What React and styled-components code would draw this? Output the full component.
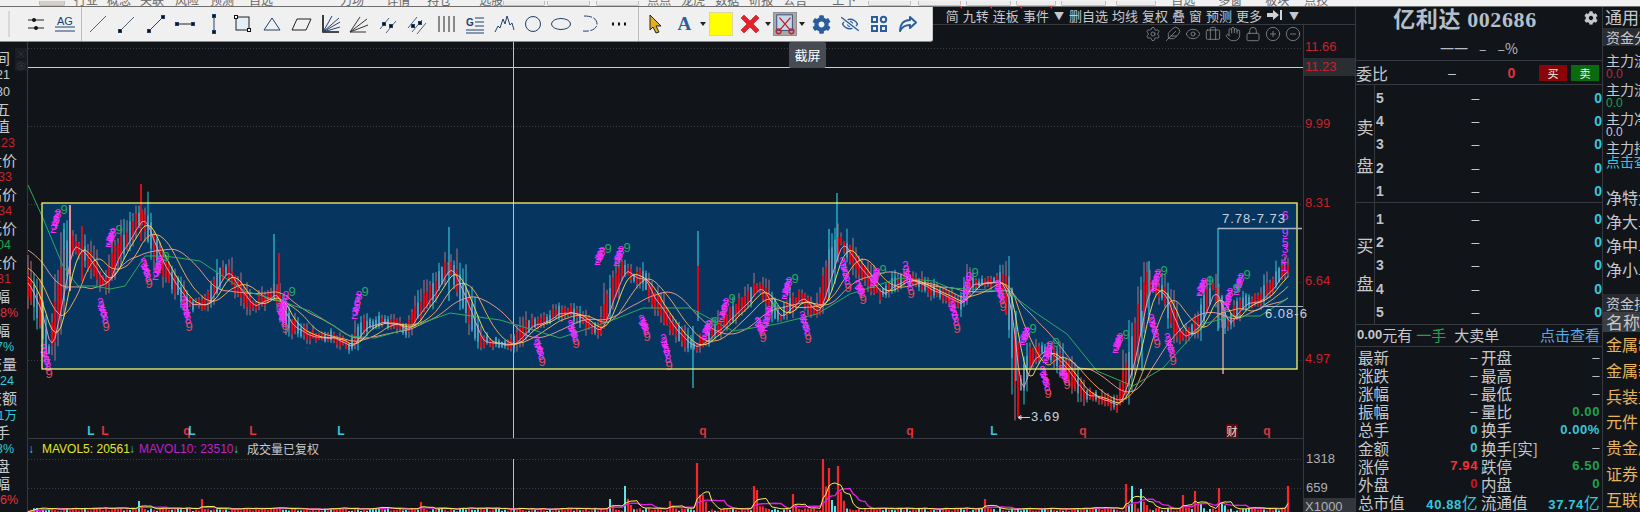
import React from "react";
import styled, { createGlobalStyle } from "styled-components";
import { Settings, Feather, Eye, Briefcase, Hand, Lock, CirclePlus, CircleMinus, X } from "lucide-react";
import { FaCog, FaRegEyeSlash } from "react-icons/fa";

const CJK = `"Noto Sans CJK SC", "Liberation Sans", sans-serif`;
const NUM = `"Liberation Sans", "Noto Sans CJK SC", sans-serif`;
const LINE = "#363a40";
const RED = "#e0323c";
const CYAN = "#33c8dc";
const GREEN = "#1fa34a";

const GlobalStyle = createGlobalStyle`
  html, body { margin: 0; padding: 0; background: #11151a; }
  #root { width: 1640px; height: 512px; overflow: hidden; }
`;

// chart data, coordinates are page pixels
const PATH = [
  [28, 285], [40, 312], [49, 352], [62, 290], [70, 245], [80, 250], [90, 262], [105, 285], [115, 260], [130, 235],
  [142, 215], [155, 250], [165, 270], [187, 303], [205, 305], [225, 270], [240, 290], [253, 306], [275, 293], [290, 325],
  [310, 335], [330, 337], [350, 345], [365, 325], [385, 320], [405, 330], [430, 297], [450, 265], [465, 300], [480, 340],
  [510, 345], [533, 323], [570, 310], [600, 332], [610, 300], [623, 270], [643, 280], [667, 320], [693, 348], [713, 333],
  [760, 287], [780, 317], [800, 297], [817, 313], [840, 240], [867, 277], [880, 293], [907, 277], [947, 297], [960, 303],
  [970, 283], [1000, 280], [1010, 310], [1018, 395], [1030, 360], [1043, 347], [1060, 360], [1083, 393], [1117, 405],
  [1130, 370], [1147, 287], [1163, 293], [1180, 337], [1197, 327], [1213, 287], [1227, 327], [1243, 303], [1260, 300], [1287, 268],
];
const LONG_MA = [
  [28, 184], [42, 215], [63, 265], [78, 285], [95, 285], [110, 288], [125, 285], [145, 255], [165, 255], [200, 260], [245, 290],
  [280, 300], [310, 310], [350, 335], [375, 337], [400, 330], [450, 312], [500, 319], [560, 337], [610, 320], [643, 307], [690, 307],
  [733, 330], [777, 323], [817, 313], [850, 293], [900, 277], [933, 280], [950, 287], [1007, 290], [1033, 310], [1067, 333],
  [1097, 370], [1133, 385], [1163, 367], [1203, 323], [1233, 315], [1260, 315], [1287, 298],
];
const SPIKES = [
  [64, 222, 300, CYAN], [70, 204, 290, "#e8909a"], [82, 225, 280, "#d01018"], [141, 183, 240, "#d01018"], [274, 233, 300, CYAN],
  [279, 252, 300, "#d01018"], [449, 226, 300, CYAN], [698, 230, 320, CYAN], [698, 265, 310, "#e00010"], [693, 325, 387, CYAN],
  [837, 192, 260, CYAN], [829, 228, 300, CYAN], [1018, 340, 416, "#e00010"], [1016, 310, 380, CYAN], [1149, 260, 320, CYAN],
  [1218, 227, 330, CYAN], [1223, 300, 373, "#a08088"], [1142, 310, 370, CYAN],
];
const RED_NINES = [
  [106, 325], [189, 325], [149, 282], [49, 372], [285, 327], [542, 360], [576, 342], [647, 335], [669, 364], [763, 336], [808, 337],
  [848, 286], [863, 298], [911, 292], [957, 327], [1003, 305], [1048, 392], [1067, 383], [1157, 342], [1173, 359],
];
const GREEN_NINES = [
  [64, 208], [119, 228], [166, 255], [292, 290], [365, 290], [608, 247], [627, 246], [715, 320], [732, 297], [775, 305], [795, 277],
  [883, 268], [975, 271], [1033, 327], [1056, 341], [1126, 333], [1164, 269], [1210, 279], [1236, 287], [1247, 273],
];
const VOL_SPIKES = [
  [625, 485], [610, 498], [671, 500], [698, 462], [753, 485], [756, 489], [792, 493], [824, 458], [828, 467], [837, 465], [984, 498],
  [1127, 483], [1131, 485], [1141, 488], [1183, 494], [1196, 490], [1218, 487], [1287, 485], [201, 498], [140, 500], [420, 501],
];
const MARKS = [
  ["L", 91, CYAN], ["L", 105, RED], ["q", 187, RED], ["L", 192, CYAN], ["L", 253, RED], ["L", 341, CYAN],
  ["q", 703, RED], ["q", 910, RED], ["L", 994, CYAN], ["q", 1083, RED], ["q", 1267, RED],
];
const TAIL_DIGITS = [["6", 1285, 215], ["9", 1285, 232], ["5", 1285, 242], ["3", 1285, 248], ["2", 1284, 258], ["1", 1284, 266]];

function interp(points, x) {
  for (let i = 1; i < points.length; i++) {
    if (x <= points[i][0]) {
      const [x0, y0] = points[i - 1];
      const [x1, y1] = points[i];
      return y0 + ((y1 - y0) * (x - x0)) / (x1 - x0);
    }
  }
  return points[points.length - 1][1];
}

function makeRandom(seed) {
  let a = seed;
  return () => {
    a = (a + 0x6d2b79f5) | 0;
    let t = Math.imul(a ^ (a >>> 15), 1 | a);
    t = (t + Math.imul(t ^ (t >>> 7), 61 | t)) ^ t;
    return ((t ^ (t >>> 14)) >>> 0) / 4294967296;
  };
}

function buildChart() {
  const rnd = makeRandom(686);
  const bars = [];
  for (let x = 28; x <= 1288; x += 3) {
    const mid = interp(PATH, x) + (rnd() - 0.5) * 5;
    const slope = Math.abs(interp(PATH, x + 6) - interp(PATH, x - 6));
    const size = 2 + slope * 0.4 + rnd() * 3;
    const up = rnd() > 0.35;
    bars.push({
      x, mid, up,
      top: mid - size,
      bottom: mid + size * 0.6,
      high: mid - size - rnd() * (3 + slope * 0.7),
      low: mid + size * 0.6 + rnd() * (3 + slope * 0.4),
    });
  }
  const average = (w, lift) =>
    bars.map((b, i) => {
      let sum = 0;
      for (let k = i - w + 1; k <= i; k++) sum += k < 0 ? bars[0].mid - lift : bars[k].mid;
      return `${b.x},${(sum / w).toFixed(1)}`;
    }).join(" ");
  const volumes = bars.map((b) => {
    let h = 2 + rnd() * 3;
    VOL_SPIKES.forEach(([sx, sy]) => {
      const d = b.x - sx;
      if (d >= 0 && d < 12) h = Math.max(h, (512 - sy) * (1 - d / 12) * (0.35 + rnd() * 0.4));
      if (Math.abs(d) < 2) h = 512 - sy;
    });
    return { x: b.x, h, up: b.up };
  });
  const volAverage = (w) =>
    volumes.map((v, i) => {
      let sum = 0;
      for (let k = Math.max(0, i - w + 1); k <= i; k++) sum += volumes[k].h;
      return `${v.x},${(512 - sum / w - 1).toFixed(1)}`;
    }).join(" ");
  const seq = [];
  RED_NINES.forEach(([x, y]) => {
    const sy = 1.4 + rnd() * 2;
    for (let n = 8; n >= 2; n--) seq.push([n, x - (9 - n) * 0.8, y - (9 - n) * sy - 3]);
  });
  GREEN_NINES.forEach(([x, y]) => {
    const sy = 1.4 + rnd() * 2;
    for (let n = 8; n >= 2; n--) seq.push([n, x - 5 - (9 - n) * 0.8, y + (9 - n) * sy + 2]);
  });
  return {
    bars, volumes, seq,
    ma5: average(3, 8), ma10: average(6, 14), ma20: average(12, 22), ma30: average(22, 40),
    maLong: LONG_MA.map((p) => p.join(",")).join(" "),
    vol5: volAverage(5), vol10: volAverage(10),
  };
}
const chart = buildChart();

const segs = (list) => list.map((s) => `M${s[0]} ${s[1]}V${s[2]}`).join("");

const Page = styled.div`
  width: 1640px;
  height: 512px;
  position: relative;
  overflow: hidden;
  background: #11151a;
  color: #c6c8cc;
  font-family: ${CJK};
  display: flex;
  flex-direction: column;
`;

const TopStrip = styled.div`
  height: 6px;
  flex: none;
  display: flex;
  align-items: flex-end;
  overflow: hidden;
  background: #f1f1f1;
  border-bottom: 1px solid #6e6e6e;
`;
const StripText = styled.span`
  flex: none;
  margin-left: ${(p) => p.$gap}px;
  font-size: 12px;
  line-height: 12px;
  color: #666;
`;
const StripBox = styled.span`
  flex: none;
  width: ${(p) => p.$w}px;
  height: 5px;
  margin-left: ${(p) => p.$gap}px;
  box-sizing: border-box;
  border: 1px solid #bdbdbd;
  border-top: 0;
  border-radius: 0 0 2px 2px;
  background: ${(p) => (p.$dark ? "#d6cfc8" : "#ececec")};
`;

const Main = styled.div`
  flex: 1;
  display: flex;
  min-height: 0;
`;

const InfoColumn = styled.div`
  flex: none;
  width: 27px;
  padding-top: 42px;
  box-sizing: border-box;
  overflow: hidden;
  position: relative;
`;
const InfoRow = styled.div`
  height: 17px;
  display: flex;
  justify-content: flex-end;
  align-items: center;
  padding-right: ${(p) => 27 - p.$end}px;
  white-space: nowrap;
  font-size: ${(p) => (p.$num ? 12.5 : 15)}px;
  font-family: ${(p) => (p.$num ? NUM : CJK)};
  color: ${(p) => p.$color || "#c6c8cc"};
`;
const PlotTools = styled.div`
  position: absolute;
  left: 15px;
  top: 41px;
  width: 12px;
  display: flex;
  flex-direction: column;
  gap: 1px;
  color: #4c5157;
`;
const PlotTool = styled.span`
  height: 11px;
  display: flex;
  align-items: center;
  justify-content: center;
  background: #1b1f24;
`;

const ChartArea = styled.div`
  flex: none;
  width: 1328px;
  position: relative;
  display: flex;
  flex-direction: column;
`;
const NavBar = styled.div`
  flex: none;
  height: 18px;
  box-sizing: border-box;
  display: flex;
  justify-content: flex-end;
  align-items: center;
  gap: 4px;
  padding-right: 55px;
  border-bottom: 1px solid ${LINE};
  font-size: 13px;
`;
const NavItem = styled.span`
  position: relative;
  white-space: nowrap;
  ${(p) => p.$flag && `
    &::after {
      content: "";
      position: absolute;
      top: 0;
      right: -3px;
      border-top: 3px solid ${RED};
      border-left: 3px solid transparent;
    }
  `}
`;
const NavArrow = styled.span`
  font-size: 10px;
  color: #c6c8cc;
  margin: 0 1px;
`;
const ViewIcons = styled.div`
  position: absolute;
  top: 19px;
  right: 54px;
  display: flex;
  gap: 4px;
  color: #8d9196;
`;
const ChartSvg = styled.svg`
  display: block;
  flex: none;
`;
const AxisText = styled.text`
  font-family: ${NUM};
  font-size: 13px;
  fill: ${(p) => p.$color || "#c8212d"};
`;
const NoteText = styled.text`
  font-family: ${NUM};
  font-size: 13px;
  letter-spacing: 1px;
  fill: #c8d2dc;
`;
const LegendText = styled.text`
  font-family: ${(p) => (p.$cjk ? CJK : NUM)};
  font-size: 12px;
  fill: ${(p) => p.$color};
`;
const Digit = styled.text`
  font-family: ${NUM};
  font-size: ${(p) => p.$size}px;
  fill: ${(p) => p.$color};
  text-anchor: middle;
  dominant-baseline: central;
`;
const Mark = styled.text`
  font-family: ${NUM};
  font-size: 12px;
  font-weight: 700;
  text-anchor: middle;
  dominant-baseline: central;
  fill: ${(p) => p.$color};
`;
const MarkCjk = styled.text`
  font-family: ${CJK};
  font-size: 11px;
  text-anchor: middle;
  dominant-baseline: central;
  fill: #e8e0d8;
`;

const QuotePanel = styled.div`
  flex: none;
  width: 248px;
  box-sizing: border-box;
  border-left: 1px solid ${LINE};
  border-right: 1px solid ${LINE};
`;
const TitleBlock = styled.div`
  height: 54px;
  box-sizing: border-box;
  border-bottom: 1px solid ${LINE};
  text-align: center;
  position: relative;
`;
const Title = styled.div`
  font-family: "Liberation Serif", "Noto Sans CJK SC", serif;
  font-weight: 700;
  font-size: 22px;
  line-height: 26px;
  padding-right: 28px;
  color: #b3bfca;
  letter-spacing: 0.6px;
`;
const SubQuote = styled.div`
  display: flex;
  justify-content: center;
  gap: 11px;
  font-size: 14px;
  line-height: 20px;
  margin-top: 5px;
  color: #b8bbc0;
`;
const TitleGear = styled.span`
  position: absolute;
  top: 4px;
  right: 4px;
  color: #c4c8cc;
  font-size: 0;
`;
const RatioRow = styled.div`
  height: 24px;
  box-sizing: border-box;
  display: grid;
  grid-template-columns: 64px 64px 55px 28px 4px 28px;
  align-items: center;
  border-bottom: 1px solid ${LINE};
  font-size: 16px;
`;
const RatioValue = styled.span`
  text-align: ${(p) => p.$align || "center"};
  font-family: ${NUM};
  font-size: 14px;
  font-weight: ${(p) => (p.$color ? 700 : 400)};
  color: ${(p) => p.$color || "#c6c8cc"};
`;
const TradeTag = styled.span`
  height: 16px;
  line-height: 16px;
  text-align: center;
  font-size: 11px;
  color: #f2f2f2;
  background: ${(p) => p.$bg};
`;
const Book = styled.div`
  display: flex;
  height: ${(p) => p.$h}px;
  box-sizing: border-box;
  border-bottom: 1px solid ${LINE};
`;
const BookLabel = styled.div`
  flex: none;
  width: 19px;
  box-sizing: border-box;
  padding-top: ${(p) => p.$top || 0}px;
  border-right: 1px solid ${LINE};
  display: flex;
  flex-direction: column;
  justify-content: center;
  align-items: center;
  gap: 18px;
  font-size: 17px;
  line-height: 20px;
`;
const BookRows = styled.div`
  flex: 1;
  padding-top: ${(p) => p.$top}px;
`;
const BookRow = styled.div`
  height: 23.3px;
  display: grid;
  grid-template-columns: 24px 1fr 24px;
  align-items: center;
  font-family: ${NUM};
  font-size: 14px;
`;
const BookNum = styled.span`
  padding-left: 1px;
  font-weight: 700;
  color: #bfc2c6;
`;
const BookDash = styled.span`
  text-align: center;
  padding-right: 26px;
  color: #c6c8cc;
`;
const BookZero = styled.span`
  text-align: right;
  font-weight: 700;
  color: ${CYAN};
`;
const SummaryRow = styled.div`
  height: 22px;
  box-sizing: border-box;
  display: flex;
  align-items: center;
  padding: 0 2px 2px 1px;
  border-bottom: 1px solid ${LINE};
  font-size: 15px;
  white-space: nowrap;
`;
const SummaryNum = styled.span`
  font-family: ${NUM};
  font-weight: 700;
  font-size: 13px;
`;
const SummaryHand = styled.span`
  color: ${GREEN};
  margin: 0 8px 0 4px;
`;
const SummaryLink = styled.span`
  margin-left: auto;
  color: #5aa8e0;
`;
const StatsGrid = styled.div`
  display: grid;
  grid-template-columns: 120px 119px;
  column-gap: 3px;
  padding: 1px 0 0 2px;
`;
const StatCell = styled.div`
  height: 18.1px;
  display: flex;
  justify-content: space-between;
  align-items: center;
  font-size: 15.5px;
  white-space: nowrap;
`;
const StatValue = styled.span`
  font-family: ${NUM};
  font-size: 13px;
  font-weight: ${(p) => (p.$color ? 700 : 400)};
  letter-spacing: 0.6px;
  color: ${(p) => p.$color || "#c6c8cc"};
`;
const StatUnit = styled.span`
  font-family: ${CJK};
  font-weight: 400;
  font-size: 15.5px;
`;

const SidePanel = styled.div`
  flex: 1;
  min-width: 0;
  overflow: hidden;
  white-space: nowrap;
  display: flex;
  flex-direction: column;
`;
const SideHead = styled.div`
  height: 19px;
  padding-left: 2px;
  font-size: 17px;
  line-height: 19px;
  flex: none;
`;
const SideBand = styled.div`
  flex: none;
  height: ${(p) => p.$h}px;
  line-height: ${(p) => p.$h}px;
  margin-top: ${(p) => p.$top || 0}px;
  padding-left: 3px;
  font-size: ${(p) => p.$size}px;
  background: ${(p) => p.$bg};
  color: ${(p) => p.$color || "#c6c8cc"};
`;
const SideLine = styled.div`
  flex: none;
  height: ${(p) => p.$h}px;
  line-height: ${(p) => p.$h}px;
  margin-top: ${(p) => p.$top || 0}px;
  padding-left: 3px;
  font-size: ${(p) => p.$size}px;
  font-family: ${(p) => (p.$num ? NUM : CJK)};
  color: ${(p) => p.$color || "#c6c8cc"};
`;

const Toolbar = styled.div`
  position: absolute;
  left: 0;
  top: 7px;
  width: 933px;
  height: 35px;
  box-sizing: border-box;
  display: flex;
  align-items: center;
  background: #f0f0f0;
  border-bottom: 1px solid #8c8c8c;
  border-right: 1px solid #c8c8c8;
  border-bottom-right-radius: 3px;
`;
const Grip = styled.span`
  flex: none;
  width: 2px;
  height: 26px;
  margin: 0 12px 0 8px;
  background: #d8d8d8;
`;
const ToolDivider = styled.span`
  flex: none;
  width: 1px;
  height: 100%;
  margin: 0 ${(p) => p.$after}px 0 ${(p) => p.$before}px;
  background: #bcbcbc;
`;
const Tool = styled.span`
  flex: none;
  width: ${(p) => p.$w}px;
  height: 24px;
  display: flex;
  align-items: center;
  justify-content: center;
`;
const ColorSwatch = styled.span`
  flex: none;
  width: 24px;
  height: 24px;
  margin: 0 3px 0 2px;
  box-sizing: border-box;
  background: #ffff00;
  border: 1px solid #d8d8a0;
`;
const ShotButton = styled.span`
  flex: none;
  width: 24px;
  height: 24px;
  display: flex;
  align-items: center;
  justify-content: center;
  background: #a8a8a8;
  border: 1px solid #909090;
  box-sizing: border-box;
`;
const Caret = styled.span`
  flex: none;
  width: ${(p) => p.$w || 12}px;
  display: flex;
  justify-content: center;
  &::before {
    content: "";
    border-top: 4px solid #222;
    border-left: 3.5px solid transparent;
    border-right: 3.5px solid transparent;
  }
`;
const LetterA = styled.span`
  font-family: "Liberation Serif", serif;
  font-weight: 700;
  font-size: 19px;
  color: #2d5f9e;
`;
const Tooltip = styled.div`
  position: absolute;
  left: 789px;
  top: 42px;
  width: 37px;
  height: 26px;
  line-height: 26px;
  text-align: center;
  border-radius: 2px;
  font-size: 13px;
  color: #fff;
  background: #474c54;
`;

const INK = "#21406e";
const Dot = ({ x, y }) => <rect x={x - 1.5} y={y - 1.5} width="3" height="3" fill="#111" />;
const Ico = ({ children, size = 24 }) => (
  <svg width={size} height={size} viewBox="0 0 24 24" fill="none" stroke={INK} strokeWidth="1">
    {children}
  </svg>
);

const DRAW_TOOLS = [
  <><path d="M4 20 20 4" stroke="#54647c" /></>,
  <><path d="M5 19 19 5" stroke="#54647c" /><Dot x={5} y={19} /></>,
  <><path d="M5 19 19 5" /><Dot x={5} y={19} /><Dot x={19} y={5} /></>,
  <><path d="M4 12h16" stroke="#222" /><Dot x={4} y={12} /><Dot x={20} y={12} /></>,
  <><path d="M12 4v16" /><Dot x={12} y={4} /><Dot x={12} y={20} /></>,
  <><rect x="5" y="5" width="13" height="13" fill="#e4eef8" stroke="#222" /><rect x="3.5" y="3.5" width="3" height="3" fill="#fff" stroke="#111" /><rect x="16.5" y="16.5" width="3" height="3" fill="#fff" stroke="#111" /></>,
  <><path d="M12 6 20 18H4Z" /></>,
  <><path d="M8 7H22L17 18H3Z" stroke="#222" /></>,
  <><path d="M5 3V20H21" stroke="#111" strokeWidth="1.6" /><path d="M5 20 21 6M5 20 22 10M5 20 22 15M5 20 14 4" /></>,
  <><path d="M3 20 20 7M3 20 21 13M3 20 13 5M3 20H19" stroke="#333" /></>,
  <><path d="M4 17 13 6M10 21 20 9" stroke="#54647c" /><Dot x={8} y={12} /><Dot x={15} y={14} /></>,
  <><path d="M3 16 12 5M7 20 17 8M12 22 21 11" stroke="#54647c" /><Dot x={8} y={14} /><Dot x={15} y={11} /></>,
  <><path d="M5 4v16M10 4v16M15 4v16M20 4v16" stroke="#222" /></>,
  <><text x="3" y="14" fontFamily="Liberation Sans" fontSize="10" fontWeight="700" fill={INK} stroke="none">G</text><path d="M12 6h9M12 10h9M12 14h9M3 18h18M3 21h18" /></>,
  <><path d="M3 20 6 14 8 16 11 7 13 12 15 4 18 13 20 11 22 18" stroke={INK} /></>,
  <><circle cx="12" cy="12" r="7.5" /></>,
  <><ellipse cx="12" cy="12" rx="9.5" ry="5.5" /></>,
  <><path d="M6 4C16 4 19 8 19 12S14 20 5 19" strokeDasharray="8 1.5" /></>,
  <><path d="M5 12h2M11 12h2M17 12h2" stroke="#111" strokeWidth="3" /></>,
];

const STRIP = [
  ["box", 26, 39, true], ["t", "行业", 9], ["t", "概念", 9], ["t", "关联", 9], ["t", "风险", 11], ["t", "预测", 11], ["t", "自选", 15],
  ["t", "一", 30], ["t", "力场", 25], ["t", "详情", 22], ["t", "持仓", 17], ["t", "选股", 28], ["box", 42, 0], ["box", 43, 2], ["box", 43, 6],
  ["t", "点点", 8], ["t", "龙虎", 10], ["t", "数据", 10], ["t", "研报", 10], ["t", "公告", 10], ["t", "上下", 25], ["box", 43, 12], ["box", 43, 7], ["box", 45, 5],
  ["box", 40, 5], ["box", 45, 5], ["box", 40, 10], ["t", "自选", 15], ["t", "多窗", 23], ["t", "板块", 23], ["t", "点技", 15],
];

const INFO = [
  ["时间", 10], ["12-21", 10, "", 1], ["09:30", 10, "", 1], ["周五", 10], ["数值", 10], ["7.23", 15, "#c8212d", 1], ["开盘价", 17],
  ["7.33", 12, "#c8212d", 1], ["最高价", 17], ["7.34", 12, "#c8212d", 1], ["最低价", 17], ["7.04", 11, GREEN, 1], ["收盘价", 17], ["7.31", 11, "#c8212d", 1],
  ["涨幅", 10], ["1.38%", 18, "#e0323c", 1], ["振幅", 10], ["4.17%", 14, CYAN, 1], ["成交量", 17], ["5624", 14, CYAN, 1], ["成交额", 17], ["4.1万", 17, CYAN, 1],
  ["换手", 10], ["1.3%", 14, CYAN, 1], ["开盘", 10], ["涨幅", 10], ["0.76%", 18, "#e0323c", 1],
];

const NAV = ["简", "九转", "连板", "事件"];
const NAV_RIGHT = ["删自选", "均线", "复权", "叠", "窗", "预测", "更多"];

const STATS = [
  ["最新", "–", "开盘", "–"],
  ["涨跌", "–", "最高", "–"],
  ["涨幅", "–", "最低", "–"],
  ["振幅", "–", "量比", "0.00", "#1fa34a"],
  ["总手", "0", "换手", "0.00%", CYAN, CYAN],
  ["金额", "0", "换手[实]", "–", null, CYAN],
  ["涨停", "7.94", "跌停", "6.50", "#1fa34a", "#f0323c"],
  ["外盘", "0", "内盘", "0", "#1fa34a", "#c81820"],
  ["总市值", "40.88", "流通值", "37.74", CYAN, CYAN],
];
const SECTORS = ["金属制品", "金属新材", "兵装重组", "元件", "贵金属", "证券", "互联网"];

function ChartPlot() {
  const { bars, volumes, seq } = chart;
  const wicks = (pick) => segs(bars.filter(pick).map((b) => [b.x, b.high, b.low]));
  const bodies = (pick) => segs(bars.filter(pick).map((b) => [b.x, b.top, b.bottom]));
  const vols = (pick) => segs(volumes.filter(pick).map((v) => [v.x, 512 - v.h, 512]));
  return (
    <ChartSvg width="1328" height="488" viewBox="27 24 1328 488">
      <path d="M1303 57h52v18h-52z" fill="#2a2e33" />
      <path d="M27.5 24V512" stroke={LINE} />
      {[47, 125, 203, 281, 359, 458, 487].map((y) => (
        <path key={y} d={`M28 ${y + 0.5}H1303`} stroke="#3c4046" strokeDasharray="1 2" />
      ))}
      <rect x="42" y="202" width="1255" height="166" fill="#06365f" />
      <path d="M513.5 41V437M513.5 458V512" stroke="#bfc0b8" />
      <path d="M28 66.5H1303" stroke="#cfcfc0" />
      <path d="M27 437.5H1303" stroke={LINE} />
      <path d="M1303.5 24V512" stroke={LINE} />

      <path d={wicks((b) => !b.up)} stroke={CYAN} strokeWidth="1" />
      <path d={wicks((b) => b.up)} stroke="#b8707c" strokeWidth="1" />
      <path d={bodies((b) => !b.up)} stroke="#7cb4d8" strokeWidth="1" />
      <path d={bodies((b) => b.up)} stroke="#dc0a14" strokeWidth="2.2" />
      {SPIKES.map(([x, a, b, c], i) => (
        <path key={i} d={`M${x} ${a}V${b}`} stroke={c} strokeWidth={c === CYAN ? 1.2 : 2} />
      ))}
      <polyline points={chart.ma30} fill="none" stroke="#f4a090" strokeWidth="0.9" />
      <polyline points={chart.ma20} fill="none" stroke="#ffb25c" strokeWidth="0.9" />
      <polyline points={chart.maLong} fill="none" stroke="#2fa860" />
      <polyline points={chart.ma10} fill="none" stroke="#f6e85a" strokeWidth="0.9" />
      <polyline points={chart.ma5} fill="none" stroke="#f0a0c0" strokeWidth="0.9" />

      {seq.map(([n, x, y], i) => (
        <Digit key={i} x={x} y={y} $size={12} $color="#ee30fa">{n}</Digit>
      ))}
      {TAIL_DIGITS.map(([n, x, y]) => (
        <Digit key={y} x={x} y={y} $size={12} $color="#ee30fa">{n}</Digit>
      ))}
      {RED_NINES.map(([x, y]) => (
        <Digit key={`r${x}`} x={x} y={y} $size={13} $color="#e8485c">9</Digit>
      ))}
      {GREEN_NINES.map(([x, y]) => (
        <Digit key={`g${x}`} x={x} y={y} $size={13} $color="#26a862">9</Digit>
      ))}
      <rect x="42" y="202" width="1255" height="166" fill="none" stroke="#f8f46a" strokeWidth="1.3" />

      <path d="M1218 227.5H1302" stroke="#a8b4c4" strokeWidth="1.5" />
      <NoteText x="1222" y="222">7.78-7.73</NoteText>
      <path d="M1262 305.5H1303" stroke="#a8b4c4" />
      <NoteText x="1265" y="317">6.08-6</NoteText>
      <path d="M1018 416.5H1030M1018 416.5l3-2v4z" stroke="#d0d4d8" />
      <NoteText x="1031" y="420">3.69</NoteText>

      {MARKS.map(([t, x, c]) => (
        <Mark key={x} x={x} y={430} $color={c}>{t}</Mark>
      ))}
      <rect x="1226" y="423" width="12" height="14" fill="#5a0a0a" />
      <MarkCjk x="1232" y="430">财</MarkCjk>

      <path d={vols((v) => !v.up)} stroke="#5de4e8" strokeWidth="2" />
      <path d={vols((v) => v.up)} stroke="#f4282c" strokeWidth="2.2" />
      <polyline points={chart.vol10} fill="none" stroke="#e020e0" strokeWidth="1.4" />
      <polyline points={chart.vol5} fill="none" stroke="#f6f050" />

      <LegendText x="28" y="452" $color={CYAN}>↓</LegendText>
      <LegendText x="42" y="452" $color="#e4e424">MAVOL5: 20561</LegendText>
      <LegendText x="129" y="452" $color={CYAN}>↓</LegendText>
      <LegendText x="139" y="452" $color="#c020c8">MAVOL10: 23510</LegendText>
      <LegendText x="233" y="452" $color={CYAN}>↓</LegendText>
      <LegendText x="247" y="453" $cjk $color="#c6c8cc">成交量已复权</LegendText>

      {[["11.66", 50], ["11.23", 70], ["9.99", 127], ["8.31", 206], ["6.64", 284], ["4.97", 362]].map(([t, y]) => (
        <AxisText key={t} x="1305" y={y}>{t}</AxisText>
      ))}
      <AxisText x="1306" y="462" $color="#aeb0b4">1318</AxisText>
      <AxisText x="1306" y="491" $color="#aeb0b4">659</AxisText>
      <path d="M1303 497h52v15h-52z" fill="#33363b" />
      <AxisText x="1305" y="510" $color="#aeb0b4">X1000</AxisText>
    </ChartSvg>
  );
}

const ScissorShot = () => (
  <svg width="22" height="22" viewBox="0 0 24 24" fill="none">
    <rect x="3" y="2" width="17" height="17" fill="#c9d6e8" stroke="#2c4a78" />
    <path d="M6 5 18 19M18 5 6 19" stroke="#b8202c" strokeWidth="1.4" />
    <circle cx="5" cy="20" r="2.6" stroke="#c81e2c" strokeWidth="1.6" />
    <circle cx="19" cy="20" r="2.6" stroke="#c81e2c" strokeWidth="1.6" />
  </svg>
);

export default function App() {
  return (
    <Page>
      <GlobalStyle />
      <TopStrip>
        {STRIP.map(([kind, v, gap, dark], i) =>
          kind === "t" ? (
            <StripText key={i} $gap={gap}>{v}</StripText>
          ) : (
            <StripBox key={i} $w={v} $gap={gap} $dark={dark} />
          )
        )}
      </TopStrip>

      <Main>
        <InfoColumn>
          {INFO.map(([t, end, color, num], i) => (
            <InfoRow key={i} $end={end} $color={color} $num={num}>{t}</InfoRow>
          ))}
          <PlotTools>
            <PlotTool><X size={10} strokeWidth={1} /></PlotTool>
            <PlotTool><Settings size={10} strokeWidth={1} /></PlotTool>
          </PlotTools>
        </InfoColumn>

        <ChartArea>
          <NavBar>
            {NAV.map((t) => <NavItem key={t} $flag>{t}</NavItem>)}
            <NavArrow>▼</NavArrow>
            {NAV_RIGHT.map((t) => <NavItem key={t}>{t}</NavItem>)}
            <NavItem>
              <svg width="18" height="12" viewBox="0 0 18 12">
                <path d="M1 4h6V1l6 5-6 5V8H1zM14 1h2v10h-2z" fill="#d0d2d6" />
              </svg>
            </NavItem>
            <NavArrow>▼</NavArrow>
          </NavBar>
          <ChartPlot />
          <ViewIcons>
            <Settings size={16} strokeWidth={1.2} />
            <Feather size={16} strokeWidth={1.2} />
            <Eye size={16} strokeWidth={1.2} />
            <Briefcase size={16} strokeWidth={1.2} />
            <Hand size={16} strokeWidth={1.2} />
            <Lock size={16} strokeWidth={1.2} />
            <CirclePlus size={16} strokeWidth={1.2} />
            <CircleMinus size={16} strokeWidth={1.2} />
          </ViewIcons>
        </ChartArea>

        <QuotePanel>
          <TitleBlock>
            <Title>亿利达 002686</Title>
            <SubQuote>
              <span>一一</span><span>–</span><span>–%</span>
            </SubQuote>
            <TitleGear><FaCog size={14} /></TitleGear>
          </TitleBlock>
          <RatioRow>
            <span>委比</span>
            <RatioValue>–</RatioValue>
            <RatioValue $color="#e0323c">0</RatioValue>
            <TradeTag $bg="#8a0505">买</TradeTag>
            <span />
            <TradeTag $bg="#0a6b0e">卖</TradeTag>
          </RatioRow>
          <Book $h={118}>
            <BookLabel $top={4}><span>卖</span><span>盘</span></BookLabel>
            <BookRows $top={1}>
              {[5, 4, 3, 2, 1].map((n) => (
                <BookRow key={n}><BookNum>{n}</BookNum><BookDash>–</BookDash><BookZero>0</BookZero></BookRow>
              ))}
            </BookRows>
          </Book>
          <Book $h={122}>
            <BookLabel><span>买</span><span>盘</span></BookLabel>
            <BookRows $top={4}>
              {[1, 2, 3, 4, 5].map((n) => (
                <BookRow key={n}><BookNum>{n}</BookNum><BookDash>–</BookDash><BookZero>0</BookZero></BookRow>
              ))}
            </BookRows>
          </Book>
          <SummaryRow>
            <SummaryNum>0.00</SummaryNum>元有
            <SummaryHand>一手</SummaryHand>
            大卖单
            <SummaryLink>点击查看</SummaryLink>
          </SummaryRow>
          <StatsGrid>
            {STATS.map(([a, av, b, bv, bc, ac]) => (
              <React.Fragment key={a}>
                <StatCell>
                  {a}
                  <StatValue $color={ac}>{av}{a === "总市值" && <StatUnit>亿</StatUnit>}</StatValue>
                </StatCell>
                <StatCell>
                  {b}
                  <StatValue $color={bc}>{bv}{b === "流通值" && <StatUnit>亿</StatUnit>}</StatValue>
                </StatCell>
              </React.Fragment>
            ))}
          </StatsGrid>
        </QuotePanel>

        <SidePanel>
          <SideHead>通用设置</SideHead>
          <SideBand $h={18} $top={2} $size={14} $bg="#2a2d32">资金分析</SideBand>
          <SideLine $h={14} $top={7} $size={14}>主力流入</SideLine>
          <SideLine $h={15} $size={12} $num $color="#c8212d">0.0</SideLine>
          <SideLine $h={14} $size={14}>主力流出</SideLine>
          <SideLine $h={15} $size={12} $num $color={GREEN}>0.0</SideLine>
          <SideLine $h={14} $size={14}>主力净额</SideLine>
          <SideLine $h={15} $size={12} $num>0.0</SideLine>
          <SideLine $h={14} $size={14}>主力持仓</SideLine>
          <SideLine $h={14} $size={14} $color={CYAN}>点击查看</SideLine>
          <SideLine $h={24} $top={17} $size={16}>净特大单</SideLine>
          <SideLine $h={24} $size={16}>净大单</SideLine>
          <SideLine $h={24} $size={16}>净中单</SideLine>
          <SideLine $h={24} $size={16}>净小单</SideLine>
          <SideBand $h={18} $top={13} $size={14} $bg="#26292e">资金排名</SideBand>
          <SideBand $h={20} $size={17} $bg="#3a3d42">名称</SideBand>
          {SECTORS.map((s) => (
            <SideLine key={s} $h={25.8} $size={16} $color="#e6b45a">{s}</SideLine>
          ))}
        </SidePanel>
      </Main>

      <Toolbar>
        <Grip />
        <Tool $w={28}>
          <Ico><path d="M4 8h16M4 16h16" stroke="#222" /><circle cx="10" cy="8" r="2" fill="#111" stroke="none" /><circle cx="12" cy="16" r="2" fill="#111" stroke="none" /></Ico>
        </Tool>
        <Tool $w={29}>
          <Ico>
            <text x="4" y="13" fontFamily="Liberation Sans" fontSize="11" fill={INK} stroke="none">AG</text>
            <path d="M2 15h20M2 19h20" />
          </Ico>
        </Tool>
        <ToolDivider $before={2} $after={2} />
        {DRAW_TOOLS.map((icon, i) => (
          <Tool key={i} $w={28.94}><Ico>{icon}</Ico></Tool>
        ))}
        <ToolDivider $before={4} $after={2} />
        <Tool $w={29}>
          <svg width="18" height="20" viewBox="0 0 18 20">
            <path d="M4 1 15 12H10L13 18 10 19 7 13 4 16Z" fill="#e0b020" stroke="#222" />
          </svg>
        </Tool>
        <Tool $w={29}><LetterA>A</LetterA></Tool>
        <Caret $w={8} />
        <ColorSwatch />
        <Tool $w={28}>
          <svg width="20" height="20" viewBox="0 0 20 20">
            <path d="M4 1 10 7 16 1 19 4 13 10 19 16 16 19 10 13 4 19 1 16 7 10 1 4Z" fill="#e8202c" stroke="#b01018" strokeWidth="0.6" />
          </svg>
        </Tool>
        <Caret $w={9} />
        <ShotButton><ScissorShot /></ShotButton>
        <Caret $w={10} />
        <Tool $w={29}><FaCog size={19} color="#2a5d9c" /></Tool>
        <Tool $w={29}><FaRegEyeSlash size={18} color="#2a5d9c" /></Tool>
        <Tool $w={29}>
          <svg width="18" height="18" viewBox="0 0 18 18" fill="none" stroke="#2a5d9c" strokeWidth="2">
            <rect x="2" y="2" width="5" height="5" /><circle cx="13.5" cy="4.5" r="2.7" /><rect x="2" y="11" width="5" height="5" /><rect x="11" y="11" width="5" height="5" />
          </svg>
        </Tool>
        <Tool $w={29}>
          <svg width="20" height="18" viewBox="0 0 20 18" fill="none" stroke="#2a5d9c" strokeWidth="2">
            <path d="M12 2 18 7.5 12 13V10C7 10 4 12 2 16 2 10 5 5 12 5Z" strokeLinejoin="round" />
          </svg>
        </Tool>
      </Toolbar>
      <Tooltip>截屏</Tooltip>
    </Page>
  );
}
